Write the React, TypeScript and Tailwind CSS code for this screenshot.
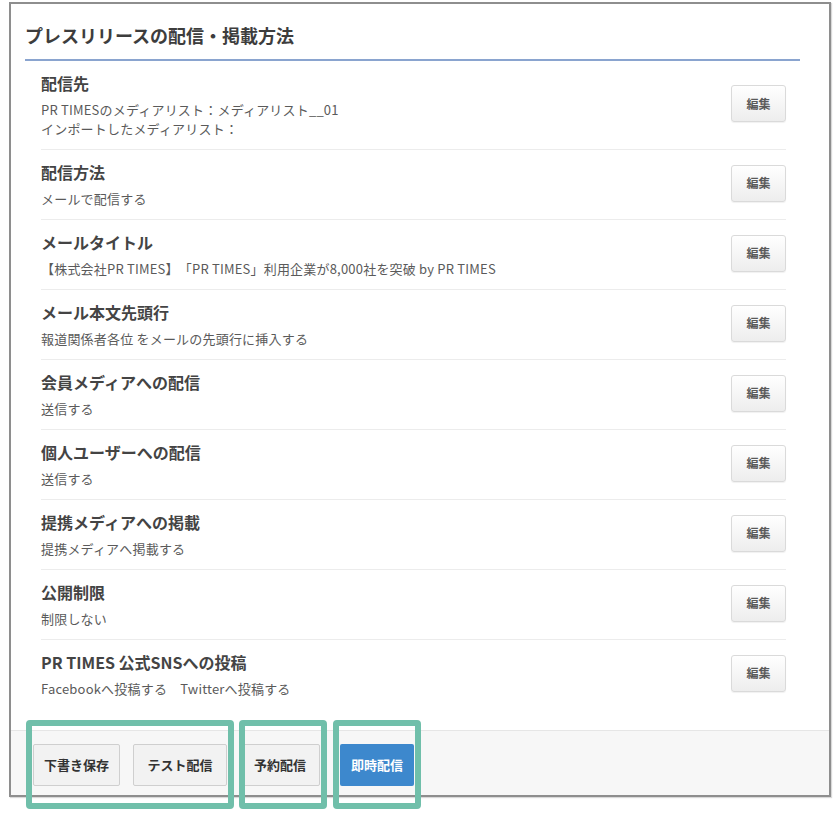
import React from "react";

const rows: { title: string; lines: string[] }[] = [
  { title: "配信先", lines: ["PR TIMESのメディアリスト：メディアリスト__01", "インポートしたメディアリスト："] },
  { title: "配信方法", lines: ["メールで配信する"] },
  { title: "メールタイトル", lines: ["【株式会社PR TIMES】「PR TIMES」利用企業が8,000社を突破 by PR TIMES"] },
  { title: "メール本文先頭行", lines: ["報道関係者各位 をメールの先頭行に挿入する"] },
  { title: "会員メディアへの配信", lines: ["送信する"] },
  { title: "個人ユーザーへの配信", lines: ["送信する"] },
  { title: "提携メディアへの掲載", lines: ["提携メディアへ掲載する"] },
  { title: "公開制限", lines: ["制限しない"] },
  { title: "PR TIMES 公式SNSへの投稿", lines: ["Facebookへ投稿する\u3000Twitterへ投稿する"] },
];

const font = { fontFamily: '"Noto Sans CJK JP", "Noto Sans", sans-serif' };

export default function App() {
  return (
    <div className="relative w-[839px] h-[815px] bg-white pt-[2px] pl-[9px] [text-spacing-trim:space-all]" style={font}>
      <div className="w-[822px] border-2 border-[#8e8e8e] bg-white shadow-[1px_1px_1px_rgba(0,0,0,0.15)]">
        <div className="ml-[14px] mr-[29px] pt-[18px] pb-[11px] border-b-2 border-[#8aa4cf]">
          <h1 className="text-[18px] leading-[26px] font-bold text-[#3d3d3d]">プレスリリースの配信・掲載方法</h1>
        </div>
        <div className="pl-[30px] pr-[43px] pb-[21px]">
          <div className="divide-y divide-[#ececec]">
            {rows.map((r) => (
              <div key={r.title} className="flex items-center justify-between pt-[11px] pb-[11px]">
                <div>
                  <div className="text-[16px] leading-[22px] font-bold text-[#444]">{r.title}</div>
                  <div className="mt-[6px] text-[13px] leading-[19px] text-[#5a5a5a] tracking-[0.2px]">
                    {r.lines.map((l) => (
                      <div key={l} className="whitespace-pre">{l}</div>
                    ))}
                  </div>
                </div>
                <button className="mb-[3px] w-[55px] h-[37px] rounded-[3px] border border-[#dadada] bg-gradient-to-b from-white to-[#ededed] text-[12px] font-bold text-[#5a5a5a] shadow-[0_1px_1px_rgba(0,0,0,0.06)]">
                  編集
                </button>
              </div>
            ))}
          </div>
        </div>
        <div className="flex items-center border-t border-[#e6e6e6] bg-[#f7f7f7] pl-[22px] pt-[13px] pb-[9px]">
          <button className="w-[87px] h-[42px] rounded-[2px] border border-[#cfcfcf] bg-[#f2f2f2] text-[13px] font-bold text-[#333]">下書き保存</button>
          <button className="ml-[13px] w-[94px] h-[42px] rounded-[2px] border border-[#cfcfcf] bg-[#f2f2f2] text-[13px] font-bold text-[#333]">テスト配信</button>
          <button className="ml-[13px] w-[80px] h-[42px] rounded-[2px] border border-[#cfcfcf] bg-[#f2f2f2] text-[13px] font-bold text-[#333]">予約配信</button>
          <button className="ml-[20px] w-[74px] h-[42px] rounded-[2px] bg-[#3d88cd] text-[13px] font-bold text-white">即時配信</button>
        </div>
      </div>
      <div className="absolute left-[26px] top-[720px] w-[208px] h-[89px] border-[6px] border-[#70bfaa] rounded-[4px]" />
      <div className="absolute left-[239px] top-[720px] w-[88px] h-[89px] border-[6px] border-[#70bfaa] rounded-[4px]" />
      <div className="absolute left-[333px] top-[720px] w-[88px] h-[89px] border-[6px] border-[#70bfaa] rounded-[4px]" />
    </div>
  );
}
